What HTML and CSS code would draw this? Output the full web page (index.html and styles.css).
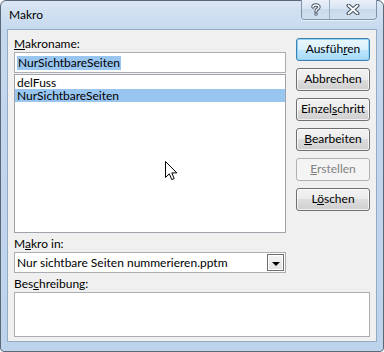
FILE: index.html
```html
<!DOCTYPE html>
<html lang="de">
<head>
    <meta charset="UTF-8">
    <title>Makro</title>
    <link rel="stylesheet" href="styles.css">
</head>
<body>

<div class="window">
    <div class="titlebar">
        <span class="title">Makro</span>
        <div class="caption-buttons">
            <div class="cap-btn cap-help">
                <svg width="10" height="13" viewBox="0 0 10 13">
                    <path d="M2 4 C2 1.5 8 1.2 8 4 C8 6 5 6 5 8.2" fill="none" stroke="#4a5666" stroke-width="3.4" stroke-linecap="round"/>
                    <path d="M2 4 C2 1.5 8 1.2 8 4 C8 6 5 6 5 8.2" fill="none" stroke="#fff" stroke-width="1.4" stroke-linecap="round"/>
                    <circle cx="5" cy="11" r="1.7" fill="#4a5666"/>
                    <circle cx="5" cy="11" r="0.8" fill="#fff"/>
                </svg>
            </div>
            <div class="cap-btn cap-close">
                <svg width="14" height="11" viewBox="0 0 14 11">
                    <path d="M2.5 1.5 L11.5 9.5 M11.5 1.5 L2.5 9.5" stroke="#4a5666" stroke-width="4" stroke-linecap="round"/>
                    <path d="M2.5 1.5 L11.5 9.5 M11.5 1.5 L2.5 9.5" stroke="#fff" stroke-width="1.8" stroke-linecap="round"/>
                </svg>
            </div>
        </div>
    </div>

    <div class="client">
        <div class="main">
            <div class="left-col">
                <div class="label"><u>M</u>akroname:</div>
                <div class="textbox"><span class="text-sel">NurSichtbareSeiten</span></div>
                <ul class="listbox">
                    <li>delFuss</li>
                    <li class="selected">NurSichtbareSeiten</li>
                </ul>
            </div>
            <div class="button-col">
                <div class="btn btn-default">Ausfüh<u>r</u>en</div>
                <div class="btn">Abbrechen</div>
                <div class="btn">Einzel<u>s</u>chritt</div>
                <div class="btn"><u>B</u>earbeiten</div>
                <div class="btn btn-disabled"><u>E</u>rstellen</div>
                <div class="btn">L<u>ö</u>schen</div>
            </div>
        </div>

        <div class="label label-gap">M<u>a</u>kro in:</div>
        <div class="combo">
            <span class="combo-text">Nur sichtbare Seiten nummerieren.pptm</span>
            <div class="combo-btn"><span class="arrow"></span></div>
        </div>

        <div class="label label-gap">Bes<u>c</u>hreibung:</div>
        <div class="desc"></div>
    </div>

    <!-- mouse pointer -->
    <svg class="cursor" width="13" height="20" viewBox="0 0 13 20">
        <path d="M0.5 0.5 L0.5 16.5 L4.3 12.8 L6.8 18.6 L9.2 17.6 L6.8 11.9 L11.8 11.9 Z" fill="#fff" stroke="#000" stroke-width="1" stroke-linejoin="miter"/>
    </svg>
</div>

</body>
</html>
```

FILE: styles.css
```css
body {
    margin: 0;
    padding: 0;
    background-color: #fff;
    font-family: 'Lato', 'Open Sans', sans-serif;
    font-size: 12px;
    color: #000;
}

u {
    text-decoration: underline;
    text-underline-offset: 1px;
}

.window {
    position: relative;
    box-sizing: border-box;
    width: 384px;
    height: 352px;
    border: 1px solid #5a6878;
    border-radius: 6px 6px 4px 4px;
    background: linear-gradient(#d9e6f4, #c4d8ee 30px, #bdd3ec);
    padding: 0 6px 9px 6px;
    display: flex;
    flex-direction: column;
}

/* Title bar */
.titlebar {
    height: 28px;
    display: flex;
    justify-content: space-between;
    align-items: flex-start;
}

.title {
    padding: 6px 0 0 2px;
    line-height: 15px;
    color: #000;
}

.caption-buttons {
    display: flex;
    margin-top: -1px;
    border: 1px solid #7f93ab;
    border-top: none;
    border-radius: 0 0 4px 4px;
    overflow: hidden;
    box-shadow: 0 1px 0 rgba(255, 255, 255, 0.6);
}

.cap-btn {
    height: 19px;
    display: flex;
    align-items: center;
    justify-content: center;
    background: linear-gradient(#e9f0f8, #d6e3f1 50%, #c8d9ec 50%, #d2e1f1);
}

.cap-help {
    width: 27px;
    border-right: 1px solid #9aacc1;
}

.cap-close {
    width: 46px;
}

/* Client area */
.client {
    flex: 1;
    border: 1px solid #95aac3;
    background-color: #f0f0f0;
    padding: 6px 6px 4px 6px;
    display: flex;
    flex-direction: column;
}

.main {
    display: flex;
    gap: 10px;
}

.left-col {
    width: 272px;
    display: flex;
    flex-direction: column;
}

.label {
    height: 16px;
    line-height: 16px;
}

.label-gap {
    margin-top: 3px;
}

.textbox {
    height: 21px;
    box-sizing: border-box;
    border: 1px solid #abadb3;
    background-color: #fff;
    padding: 2px 0 0 2px;
}

.text-sel {
    display: inline-block;
    background-color: #99c5f1;
    line-height: 14px;
    padding: 0 1px;
}

.listbox {
    list-style: none;
    margin: 1px 0 0 0;
    padding: 1px 0 0 0;
    height: 159px;
    box-sizing: border-box;
    border: 1px solid #a0a4aa;
    background-color: #fff;
}

.listbox li {
    height: 13px;
    line-height: 13px;
    padding-left: 2px;
}

.listbox li.selected {
    background-color: #99c5f1;
}

/* Buttons */
.button-col {
    width: 74px;
    padding-top: 2px;
    display: flex;
    flex-direction: column;
    gap: 7px;
}

.btn {
    height: 23px;
    box-sizing: border-box;
    border: 1px solid #707070;
    border-radius: 3px;
    background: linear-gradient(#f2f2f2, #ebebeb 50%, #dddddd 50%, #cfcfcf);
    box-shadow: inset 0 0 0 1px rgba(255, 255, 255, 0.7);
    text-align: center;
    line-height: 20px;
}

.btn-default {
    border-color: #3c7fb1;
    background: linear-gradient(#eaf6fd, #d9f0fc 50%, #bee6fd 50%, #a7d9f5);
    box-shadow: inset 0 0 0 1px #90d3f5;
}

.btn-disabled {
    border-color: #adb2b5;
    background: #f4f4f4;
    box-shadow: none;
    color: #838383;
}

/* Combo box */
.combo {
    width: 272px;
    height: 21px;
    box-sizing: border-box;
    border: 1px solid #abadb3;
    background-color: #fff;
    display: flex;
    align-items: center;
    justify-content: space-between;
    padding: 0 1px 0 2px;
}

.combo-btn {
    width: 17px;
    height: 17px;
    box-sizing: border-box;
    border: 1px solid #6d6d6d;
    background: linear-gradient(#f4f4f4, #e2e2e2);
    box-shadow: inset 0 0 0 1px #fff;
    display: flex;
    align-items: center;
    justify-content: center;
}

.arrow {
    width: 0;
    height: 0;
    border-left: 4px solid transparent;
    border-right: 4px solid transparent;
    border-top: 4px solid #000;
    margin-top: 2px;
}

/* Description */
.desc {
    height: 45px;
    box-sizing: border-box;
    border: 1px solid #abadb3;
    background-color: #fff;
}

.cursor {
    position: absolute;
    left: 164px;
    top: 160px;
}
```
